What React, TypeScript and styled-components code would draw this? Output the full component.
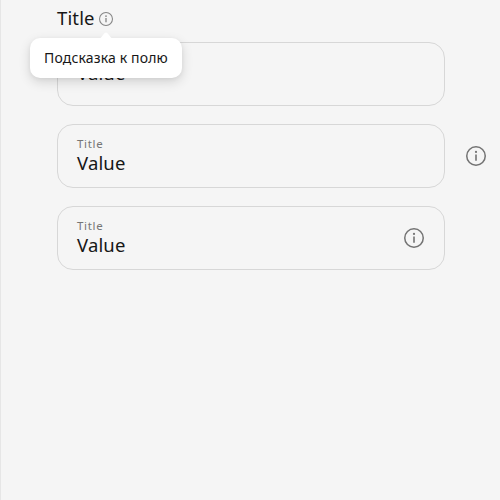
import React from 'react';
import styled, { createGlobalStyle } from 'styled-components';

const GlobalStyle = createGlobalStyle`
  * { box-sizing: border-box; }
  body {
    margin: 0;
    background: #f5f5f5;
    color: #171717;
    font-family: "Noto Sans", "Open Sans", sans-serif;
  }
`;

const Page = styled.main`
  height: 500px;
  overflow: hidden;
  border-left: 1px solid #e6e6e6;
  padding: 7px 0 0 56px;
`;

const OuterLabel = styled.div`
  position: relative;
  display: flex;
  align-items: center;
  gap: 4px;
  height: 24px;
  margin-bottom: 11px;
`;

const OuterTitle = styled.span`
  width: 38px;
  padding-bottom: 2px;
  font-size: 18.5px;
  line-height: 22px;
  letter-spacing: 0.15px;
  white-space: nowrap;
`;

const Fields = styled.div`
  display: flex;
  flex-direction: column;
  gap: 18px;
`;

const FieldRow = styled.div`
  display: flex;
  align-items: center;
  gap: 21px;
`;

const FieldBox = styled.div<{ $titled: boolean }>`
  display: flex;
  align-items: center;
  justify-content: space-between;
  width: 388px;
  height: 64px;
  padding: 0 20px ${({ $titled }) => ($titled ? 0 : 2)}px 19px;
  border: 1px solid #d7d7d7;
  border-radius: 16px;
`;

const FieldText = styled.div`
  display: flex;
  flex-direction: column;
`;

const InnerTitle = styled.span`
  font-size: 11.5px;
  line-height: 14px;
  letter-spacing: 0.7px;
  color: #767676;
`;

const Value = styled.span`
  font-size: 18.5px;
  line-height: 24px;
  letter-spacing: 0.15px;
`;

const Tooltip = styled.div`
  position: absolute;
  top: 31px;
  left: -27px;
  display: flex;
  align-items: center;
  justify-content: center;
  width: 152px;
  height: 40px;
  border-radius: 10px;
  background: #fff;
  box-shadow: 0 4px 12px rgba(0, 0, 0, 0.14), 0 1px 4px rgba(0, 0, 0, 0.05);
  font-size: 14px;
  line-height: 18px;
  letter-spacing: 0.15px;
  white-space: nowrap;
`;

const Arrow = styled.svg`
  position: absolute;
  top: -6px;
  left: 67px;
`;

const Icon = styled.svg`
  display: block;
  flex: none;
`;

function InfoIcon({ size = 20 }: { size?: number }) {
  const small = size < 20;
  return (
    <Icon width={size} height={size} viewBox="0 0 20 20" fill="none">
      <circle cx="10" cy="10" r="9.25" stroke={small ? '#858585' : '#737373'} strokeWidth="1.5" />
      <path d="M10 8.5v6.2" stroke="#737373" strokeWidth="1.6" />
      <circle cx="10" cy="5.9" r="1.1" fill="#737373" />
    </Icon>
  );
}

function Field({ title, inside, outside }: { title?: string; inside?: boolean; outside?: boolean }) {
  return (
    <FieldRow>
      <FieldBox $titled={Boolean(title)}>
        <FieldText>
          {title && <InnerTitle>{title}</InnerTitle>}
          <Value>Value</Value>
        </FieldText>
        {inside && <InfoIcon />}
      </FieldBox>
      {outside && <InfoIcon />}
    </FieldRow>
  );
}

export default function App() {
  return (
    <Page>
      <GlobalStyle />
      <OuterLabel>
        <OuterTitle>Title</OuterTitle>
        <InfoIcon size={14} />
        <Tooltip role="tooltip">
          <Arrow width="18" height="7" viewBox="0 0 18 7">
            <path d="M0 7C4 7 5 4 7.5 1.2Q9 -.4 10.5 1.2C13 4 14 7 18 7Z" fill="#fff" />
          </Arrow>
          Подсказка к полю
        </Tooltip>
      </OuterLabel>
      <Fields>
        <Field />
        <Field title="Title" outside />
        <Field title="Title" inside />
      </Fields>
    </Page>
  );
}
